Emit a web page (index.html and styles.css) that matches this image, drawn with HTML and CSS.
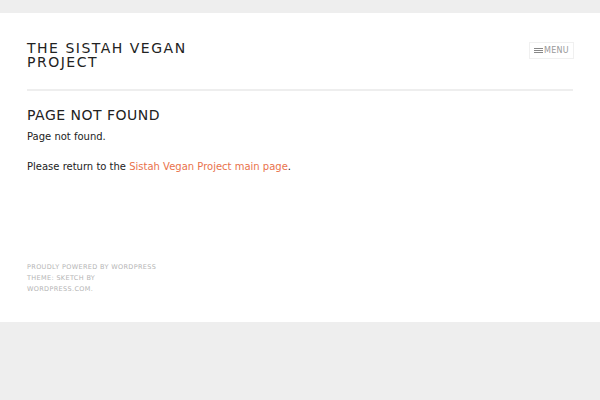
FILE: index.html
```html
<!DOCTYPE html>
<html lang="en">
<head>
    <meta charset="UTF-8">
    <meta name="viewport" content="width=device-width, initial-scale=1.0">
    <title>Page not found | The Sistah Vegan Project</title>
    <link rel="stylesheet" href="styles.css">
</head>
<body>
    <div id="page" class="site">
        <header class="site-header">
            <h1 class="site-title"><a href="#">The Sistah Vegan Project</a></h1>
            <button class="menu-toggle">
                <svg class="menu-icon" width="9" height="5" viewBox="0 0 9 5">
                    <rect x="0" y="0" width="9" height="1" fill="#888"/>
                    <rect x="0" y="2" width="9" height="1" fill="#888"/>
                    <rect x="0" y="4" width="9" height="1" fill="#888"/>
                </svg>Menu
            </button>
        </header>

        <main class="site-content">
            <h2 class="page-title">Page not found</h2>
            <p>Page not found.</p>
            <p>Please return to the <a href="#">Sistah Vegan Project main page</a>.</p>
        </main>

        <footer class="site-footer">
            <a href="#">Proudly powered by WordPress</a><br>
            Theme: Sketch by<br>
            <a href="#">WordPress.com</a>.
        </footer>
    </div>
</body>
</html>
```

FILE: styles.css
```css
body {
    margin: 0;
    padding-top: 13px;
    background-color: #eee;
    font-family: 'DejaVu Sans', sans-serif;
    color: #222;
}

a {
    color: #e9724c;
    text-decoration: none;
}

.site {
    background: #fff;
    padding: 0 27px 27px;
}

/* Header */
.site-header {
    display: flex;
    justify-content: space-between;
    align-items: flex-start;
    padding: 28px 0 20px;
    border-bottom: 2px solid #eee;
}

.site-title {
    margin: 0;
    width: 190px;
    font-size: 14px;
    font-weight: normal;
    line-height: 14px;
    letter-spacing: 1.5px;
    text-transform: uppercase;
}

.site-title a {
    color: #222;
}

.menu-toggle {
    display: flex;
    align-items: flex-end;
    gap: 1px;
    margin: 1px -1px 0 0;
    padding: 3px 4px 3px 4px;
    background: #fff;
    border: 1px solid #f0f0f0;
    color: #999;
    font-family: 'DejaVu Sans', sans-serif;
    font-size: 8px;
    line-height: 9px;
    letter-spacing: 0.3px;
    text-transform: uppercase;
    cursor: pointer;
}

.menu-icon {
    margin-bottom: 2px;
}

/* Content */
.site-content {
    padding-top: 16px;
    font-size: 10px;
}

.page-title {
    margin: 0 0 6px;
    font-size: 14px;
    font-weight: normal;
    line-height: 16px;
    letter-spacing: 0.5px;
    text-transform: uppercase;
}

.site-content p {
    margin: 0 0 14px;
    line-height: 16px;
}

/* Footer */
.site-footer {
    padding-top: 73px;
    font-size: 6.5px;
    line-height: 11px;
    letter-spacing: 0.35px;
    text-transform: uppercase;
    color: #b5b5b5;
}

.site-footer a {
    color: #b5b5b5;
}
```
